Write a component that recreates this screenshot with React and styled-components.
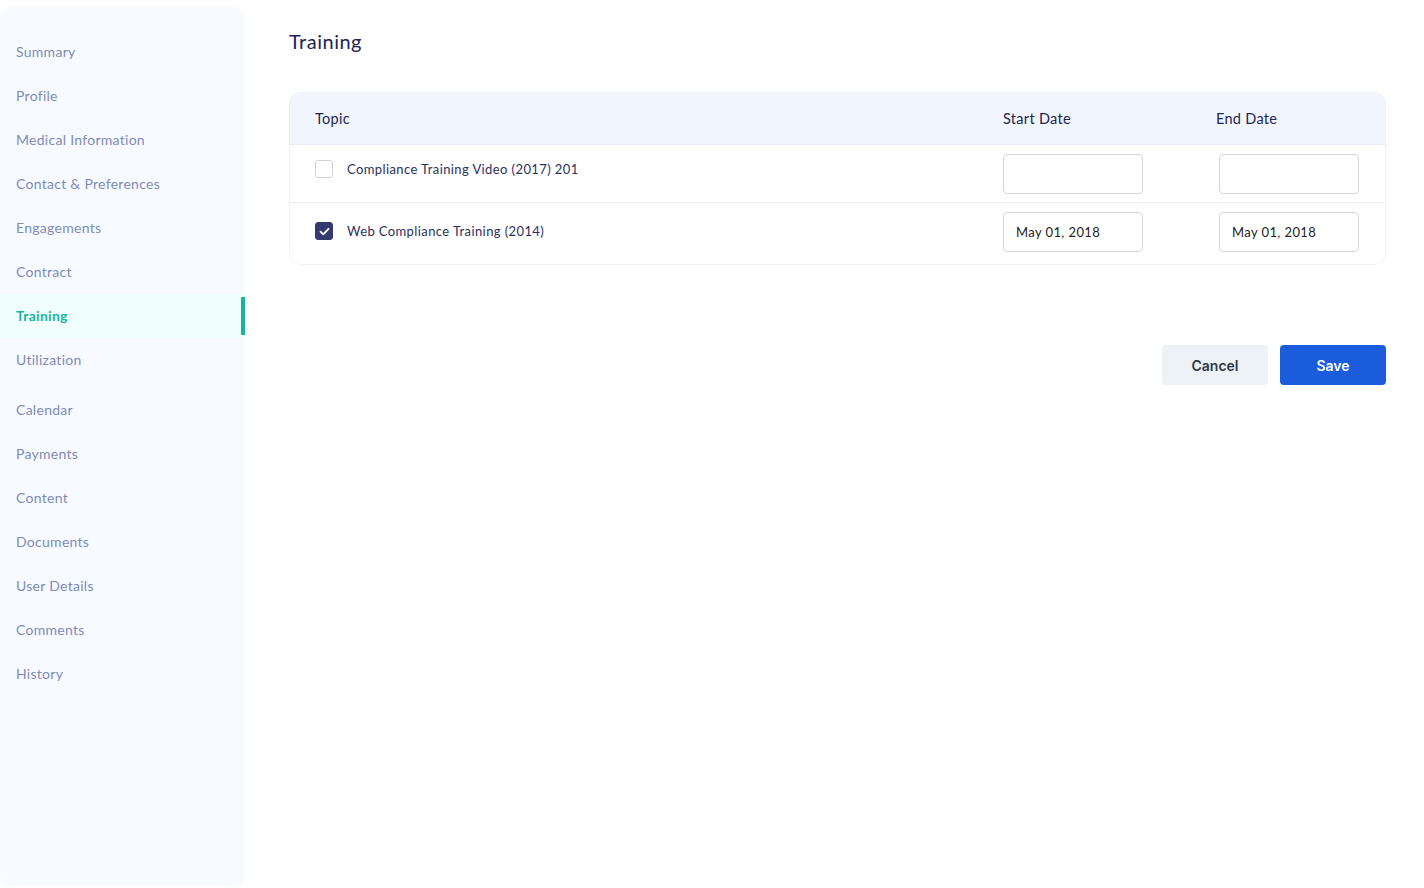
import React, { useState } from 'react';
import styled, { createGlobalStyle } from 'styled-components';

const GlobalStyle = createGlobalStyle`
  body {
    margin: 0;
    background: #ffffff;
    font-family: Lato, "Noto Sans", sans-serif;
  }
  * {
    box-sizing: border-box;
  }
`;

const Page = styled.div`
  display: flex;
  width: 1424px;
  height: 888px;
`;

const Sidebar = styled.nav`
  width: 245px;
  flex-shrink: 0;
  margin: 7px 0 2px;
  padding-top: 22px;
  background: #f7fbff;
  border-radius: 10px;
  display: flex;
  flex-direction: column;
`;

const NavItem = styled.a`
  position: relative;
  display: flex;
  align-items: center;
  height: 44px;
  padding-left: 16px;
  margin-bottom: ${p => (p.spaced ? '6px' : '0')};
  font-size: 14px;
  letter-spacing: 0.28px;
  color: ${p => (p.active ? '#1bb3a3' : '#7f8aba')};
  font-weight: ${p => (p.active ? 700 : 400)};
  background: ${p => (p.active ? '#f0fffe' : 'transparent')};
  text-decoration: none;
  cursor: pointer;

  &::after {
    content: '';
    display: ${p => (p.active ? 'block' : 'none')};
    position: absolute;
    right: 0;
    top: 4px;
    bottom: 2px;
    width: 4px;
    background: #1bb3a3;
  }
`;

const Main = styled.main`
  flex: 1;
  padding: 29px 38px 0 44px;
  display: flex;
  flex-direction: column;
`;

const Title = styled.h1`
  margin: 0 0 38px;
  font-size: 20px;
  line-height: 25px;
  font-weight: 400;
  letter-spacing: 0.5px;
  color: #1e2257;
`;

const Table = styled.div`
  border: 1px solid #eef0f5;
  border-radius: 12px;
  overflow: hidden;
`;

const Row = styled.div`
  display: grid;
  grid-template-columns: 1fr 213px 169px;
  align-items: ${p => (p.header ? 'center' : 'start')};
  padding: ${p => (p.header ? '0' : '9px')} 0 0 25px;
  height: ${p => p.h}px;
  background: ${p => (p.header ? '#f0f5fe' : '#ffffff')};
  border-bottom: ${p => (p.last ? 'none' : '1px solid #e9ecf8')};
  font-size: ${p => (p.header ? '14.5px' : '13px')};
  letter-spacing: ${p => (p.header ? '0.3px' : '0.4px')};
  color: ${p => (p.header ? '#1f2455' : '#2b3060')};
`;

const Topic = styled.label`
  display: flex;
  align-items: center;
  gap: 14px;
  margin-top: ${p => p.offset}px;
  cursor: pointer;
`;

const Box = styled.span`
  width: 18px;
  height: 18px;
  border-radius: 3px;
  display: flex;
  align-items: center;
  justify-content: center;
  border: 1.5px solid ${p => (p.checked ? '#343a70' : '#d1d1d4')};
  background: ${p => (p.checked ? '#343a70' : '#ffffff')};
`;

const DateInput = styled.input`
  width: 140px;
  height: 40px;
  margin-left: ${p => (p.end ? '3px' : '0')};
  border: 1px solid #d6d6d9;
  border-radius: 4px;
  padding: 0 12px;
  font-family: Lato, "Noto Sans", sans-serif;
  font-size: 13px;
  letter-spacing: 0.4px;
  color: #222;
  outline: none;
`;

const Actions = styled.div`
  display: flex;
  justify-content: flex-end;
  gap: 12px;
  margin-top: 80px;
`;

const Button = styled.button`
  width: 106px;
  height: 40px;
  border: none;
  border-radius: 4px;
  font-family: Inter, "Liberation Sans", sans-serif;
  font-size: 14px;
  font-weight: 600;
  cursor: pointer;
  background: ${p => (p.primary ? '#1a5cdb' : '#edf2f7')};
  color: ${p => (p.primary ? '#ffffff' : '#2d3748')};
`;

const navItems = [
  'Summary',
  'Profile',
  'Medical Information',
  'Contact & Preferences',
  'Engagements',
  'Contract',
  'Training',
  'Utilization',
  'Calendar',
  'Payments',
  'Content',
  'Documents',
  'User Details',
  'Comments',
  'History',
];

const Check = () => (
  <svg width="11" height="9" viewBox="0 0 11 9" fill="none">
    <path d="M1.5 4.6l2.8 2.7L9.5 1.8" stroke="#fff" strokeWidth="1.8" strokeLinecap="round" strokeLinejoin="round" />
  </svg>
);

const trainings = [
  { id: 1, name: 'Compliance Training Video (2017) 201', checked: false, start: '', end: '', offset: 6 },
  { id: 2, name: 'Web Compliance Training (2014)', checked: true, start: 'May 01, 2018', end: 'May 01, 2018', offset: 10 },
];

const App = () => {
  const [rows, setRows] = useState(trainings);
  const toggle = id =>
    setRows(rows.map(r => (r.id === id ? { ...r, checked: !r.checked } : r)));

  return (
    <Page>
      <GlobalStyle />
      <Sidebar>
        {navItems.map(item => (
          <NavItem key={item} active={item === 'Training'} spaced={item === 'Utilization'}>
            {item}
          </NavItem>
        ))}
      </Sidebar>
      <Main>
        <Title>Training</Title>
        <Table>
          <Row header h={52}>
            <span>Topic</span>
            <span>Start Date</span>
            <span>End Date</span>
          </Row>
          {rows.map((r, i) => (
            <Row key={r.id} h={i === 0 ? 58 : 61} last={i === rows.length - 1}>
              <Topic offset={r.offset} onClick={() => toggle(r.id)}>
                <Box checked={r.checked}>{r.checked ? <Check /> : null}</Box>
                {r.name}
              </Topic>
              <DateInput defaultValue={r.start} />
              <DateInput end defaultValue={r.end} />
            </Row>
          ))}
        </Table>
        <Actions>
          <Button>Cancel</Button>
          <Button primary>Save</Button>
        </Actions>
      </Main>
    </Page>
  );
};

export default App;
